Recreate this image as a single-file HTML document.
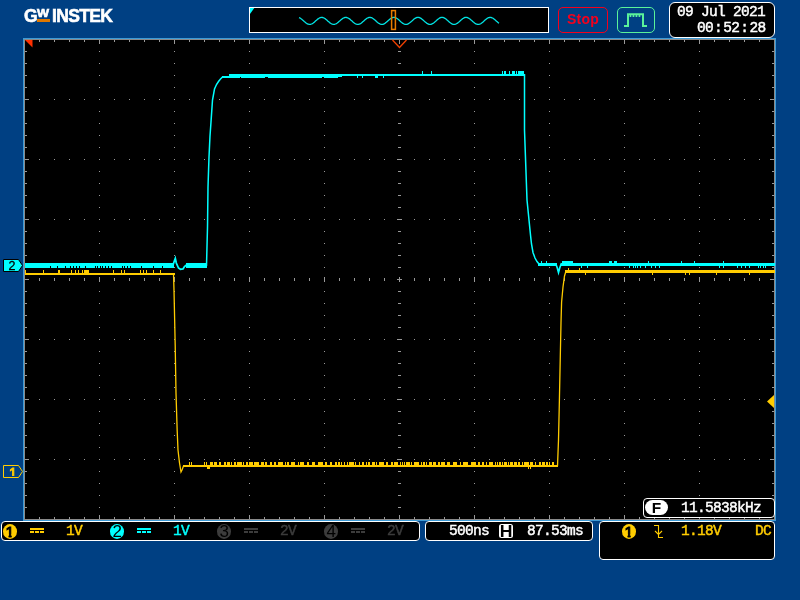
<!DOCTYPE html>
<html lang="en"><head><meta charset="utf-8"><title>GW Instek oscilloscope</title>
<style>
html,body{margin:0;padding:0}
body{width:800px;height:600px;overflow:hidden;position:relative;background:#004083;font-family:"Liberation Mono",monospace}
.a{position:absolute;box-sizing:border-box}
.t,.circ,.logo,.a{will-change:transform}
.box{position:absolute;box-sizing:border-box;background:#000;border:1px solid #fff;border-radius:4px}
.t{position:absolute;white-space:pre;font-family:"Liberation Mono",monospace;font-size:14.5px;letter-spacing:-0.7px;line-height:16px;color:#fff;-webkit-text-stroke:0.45px currentColor;margin-top:1px}.t i{font-style:normal;margin:0 1.1px}
.y{color:#ffcc00}.c{color:#00ffff}.g{color:#3c3c3c}
.circ{position:absolute;box-sizing:border-box;width:14.4px;height:15px;border-radius:50%;font-family:"Liberation Sans",sans-serif;font-size:17px;line-height:15.5px;text-align:center;color:#000}.circ b{position:absolute;left:2.55px;top:-1px;font-weight:normal;font-size:15.5px;line-height:17px;-webkit-text-stroke:1px #000;clip-path:polygon(0 0,100% 0,100% 11.1px,6px 11.1px,6px 100%,3.1px 100%,3.1px 11.1px,0 11.1px)}
.logo{position:absolute;font-family:"Liberation Sans",sans-serif;font-weight:bold;color:#fff;white-space:pre}
svg{position:absolute;left:0;top:0}
</style></head><body>

<div class="logo" style="left:23.5px;top:5px;font-size:17.5px;line-height:22px;-webkit-text-stroke:0.6px #fff">G</div>
<div class="logo" style="left:37.3px;top:4.6px;font-size:11px;line-height:16px;-webkit-text-stroke:0.6px #fff;transform:scaleX(1.16);transform-origin:0 0">W</div>
<div class="a" style="left:37px;top:19px;width:13px;height:3px;background:#e07800"></div>
<div class="logo" style="left:52.3px;top:5px;font-size:17.5px;line-height:22px;letter-spacing:-0.65px;-webkit-text-stroke:0.6px #fff">INSTEK</div>

<div class="a" style="left:249px;top:7px;width:300px;height:26px;background:#000;border:1px solid #fff"></div>
<div class="a" style="left:558px;top:7px;width:50px;height:26px;border:1px solid #f4001c;border-radius:5px;color:#f4001c;font-family:'Liberation Sans',sans-serif;font-weight:bold;font-size:14px;line-height:22px;letter-spacing:0.2px;text-align:center">Stop</div>
<div class="a" style="left:617px;top:7px;width:38px;height:26px;border:1px solid #5af29a;border-radius:5px"></div>

<div class="box" style="left:669px;top:2px;width:106px;height:36px;border-radius:6px"></div>
<div class="t" style="left:677px;top:3px">09 Jul 2021</div>
<div class="t" style="left:697px;top:19px">00<i>:</i>52<i>:</i>28</div>

<div class="a" style="left:23px;top:38px;width:753px;height:483px;border:1px solid #3c9ad6;background:#8a8a8a"></div>
<div class="a" style="left:25px;top:40px;width:749px;height:479px;background:#000"></div>

<div class="box" style="left:1px;top:521px;width:419px;height:20px"></div>
<div class="box" style="left:425px;top:521px;width:168px;height:20px"></div>
<div class="box" style="left:599px;top:521px;width:176px;height:39px"></div>
<svg width="800" height="600" viewBox="0 0 800 600" shape-rendering="crispEdges">
<g stroke="#999999" stroke-width="1" fill="none">
<line x1="99.5" y1="51" x2="99.5" y2="518" stroke-dasharray="1 11"/>
<line x1="174.5" y1="51" x2="174.5" y2="518" stroke-dasharray="1 11"/>
<line x1="249.5" y1="51" x2="249.5" y2="518" stroke-dasharray="1 11"/>
<line x1="324.5" y1="51" x2="324.5" y2="518" stroke-dasharray="1 11"/>
<line x1="474.5" y1="51" x2="474.5" y2="518" stroke-dasharray="1 11"/>
<line x1="549.5" y1="51" x2="549.5" y2="518" stroke-dasharray="1 11"/>
<line x1="624.5" y1="51" x2="624.5" y2="518" stroke-dasharray="1 11"/>
<line x1="699.5" y1="51" x2="699.5" y2="518" stroke-dasharray="1 11"/>
<line x1="39" y1="99.5" x2="773" y2="99.5" stroke-dasharray="1 14"/>
<line x1="39" y1="159.5" x2="773" y2="159.5" stroke-dasharray="1 14"/>
<line x1="39" y1="219.5" x2="773" y2="219.5" stroke-dasharray="1 14"/>
<line x1="39" y1="339.5" x2="773" y2="339.5" stroke-dasharray="1 14"/>
<line x1="39" y1="399.5" x2="773" y2="399.5" stroke-dasharray="1 14"/>
<line x1="39" y1="459.5" x2="773" y2="459.5" stroke-dasharray="1 14"/>
<line x1="399.5" y1="51" x2="399.5" y2="518" stroke-width="3" stroke-dasharray="1 11"/>
<line x1="39" y1="279.5" x2="773" y2="279.5" stroke-width="3" stroke-dasharray="1 14"/>
<line x1="399.5" y1="99" x2="399.5" y2="518" stroke-width="5" stroke-dasharray="1 59"/>
<line x1="99" y1="279.5" x2="773" y2="279.5" stroke-width="5" stroke-dasharray="1 74"/>
<line x1="39" y1="41" x2="773" y2="41" stroke-width="2" stroke-dasharray="1 14"/>
<line x1="99" y1="42" x2="773" y2="42" stroke-width="4" stroke-dasharray="1 74"/>
<line x1="39" y1="518" x2="773" y2="518" stroke-width="2" stroke-dasharray="1 14"/>
<line x1="99" y1="517" x2="773" y2="517" stroke-width="4" stroke-dasharray="1 74"/>
<line x1="26" y1="51" x2="26" y2="518" stroke-width="2" stroke-dasharray="1 11"/>
<line x1="27" y1="99" x2="27" y2="518" stroke-width="4" stroke-dasharray="1 59"/>
<line x1="773" y1="51" x2="773" y2="518" stroke-width="2" stroke-dasharray="1 11"/>
<line x1="772" y1="99" x2="772" y2="518" stroke-width="4" stroke-dasharray="1 59"/>
<path d="M397 279.5h5M399.5 277v5"/>
</g>
<path d="M25 40H32.5V47.5Z" fill="#ff3000" shape-rendering="auto"/>
<path d="M392.5 40L399.5 47.5L406.5 40" fill="none" stroke="#f04000" stroke-width="1.3" shape-rendering="auto"/>
<g fill="#ffcc00"><path d="M25 273h150v2h-150zM25 270h1v3h-1zM43 270h1v3h-1zM58 270h2v3h-2zM71 270h1v3h-1zM75 270h1v3h-1zM78 270h1v3h-1zM82 270h1v3h-1zM84 270h5v3h-5zM113 270h1v3h-1zM121 270h1v3h-1zM124 270h1v3h-1zM140 270h1v3h-1zM143 270h1v3h-1zM146 270h1v3h-1zM153 270h1v3h-1zM160 270h1v3h-1zM183 465h375v2h-375zM210 462h3v3h-3zM214 462h3v3h-3zM219 462h2v3h-2zM224 462h2v3h-2zM227 462h3v3h-3zM231 462h1v3h-1zM234 462h2v3h-2zM237 462h5v3h-5zM243 462h1v3h-1zM246 462h2v3h-2zM249 462h4v3h-4zM254 462h5v3h-5zM261 462h3v3h-3zM265 462h2v3h-2zM270 462h2v3h-2zM274 462h2v3h-2zM278 462h5v3h-5zM285 462h1v3h-1zM287 462h2v3h-2zM291 462h4v3h-4zM298 462h1v3h-1zM300 462h4v3h-4zM307 462h2v3h-2zM312 462h3v3h-3zM318 462h5v3h-5zM325 462h2v3h-2zM330 462h2v3h-2zM335 462h2v3h-2zM338 462h2v3h-2zM341 462h1v3h-1zM344 462h1v3h-1zM347 462h1v3h-1zM349 462h5v3h-5zM355 462h1v3h-1zM359 462h1v3h-1zM362 462h2v3h-2zM366 462h1v3h-1zM368 462h2v3h-2zM372 462h3v3h-3zM376 462h1v3h-1zM379 462h5v3h-5zM386 462h2v3h-2zM391 462h2v3h-2zM394 462h4v3h-4zM400 462h1v3h-1zM402 462h1v3h-1zM404 462h1v3h-1zM406 462h4v3h-4zM411 462h1v3h-1zM414 462h5v3h-5zM421 462h1v3h-1zM423 462h2v3h-2zM426 462h1v3h-1zM429 462h3v3h-3zM433 462h3v3h-3zM438 462h2v3h-2zM441 462h4v3h-4zM447 462h3v3h-3zM453 462h4v3h-4zM460 462h1v3h-1zM463 462h5v3h-5zM471 462h5v3h-5zM478 462h2v3h-2zM482 462h2v3h-2zM486 462h1v3h-1zM489 462h4v3h-4zM495 462h1v3h-1zM497 462h1v3h-1zM499 462h2v3h-2zM502 462h1v3h-1zM504 462h3v3h-3zM508 462h1v3h-1zM510 462h3v3h-3zM514 462h3v3h-3zM518 462h2v3h-2zM522 462h1v3h-1zM524 462h5v3h-5zM530 462h3v3h-3zM535 462h1v3h-1zM539 462h2v3h-2zM542 462h3v3h-3zM546 462h2v3h-2zM549 462h1v3h-1zM552 462h2v3h-2zM189 462h1v3h-1zM191 462h1v3h-1zM204 462h1v3h-1zM206 462h1v3h-1zM207 467h3v2h-3zM528 467h1v2h-1zM530 467h1v2h-1zM565 270h210v3h-210zM585 273h1v2h-1zM652 273h1v2h-1zM685 273h1v2h-1zM689 273h1v2h-1zM716 273h1v2h-1zM749 273h1v2h-1zM568 268h1v2h-1zM579 268h1v2h-1z"/></g>
<g fill="none" stroke="#ffcc00" stroke-width="1.3" shape-rendering="auto"><path d="M173.5 274 L174 290 L175.2 345 L176 393 L177.2 431 L178 450 L179.5 463 L181 472 L182 470 L183.5 466"/><path d="M557.5 466 L558.5 440 L559.4 400 L560.3 356 L561 323 L561.6 302 L563 287 L564.5 276 L566 271"/></g>
<g fill="#00ffff"><path d="M25 263h149v3h-149zM186 263h21v5h-21zM25 266h25v2h-25zM51 266h6v2h-6zM58 266h7v2h-7zM66 266h4v2h-4zM71 266h2v2h-2zM74 266h2v2h-2zM77 266h2v2h-2zM80 266h5v2h-5zM86 266h9v2h-9zM96 266h1v2h-1zM98 266h2v2h-2zM101 266h1v2h-1zM103 266h2v2h-2zM106 266h2v2h-2zM109 266h2v2h-2zM112 266h10v2h-10zM123 266h1v2h-1zM125 266h2v2h-2zM128 266h2v2h-2zM131 266h10v2h-10zM142 266h11v2h-11zM154 266h8v2h-8zM163 266h11v2h-11zM222 76h8v2h-8zM229 74h113v3h-113zM229 77h4v1h-4zM233 77h2v1h-2zM235 77h3v1h-3zM238 77h2v1h-2zM241 77h8v1h-8zM249 77h5v1h-5zM254 77h8v1h-8zM262 77h3v1h-3zM268 77h2v1h-2zM270 77h8v1h-8zM278 77h5v1h-5zM283 77h4v1h-4zM287 77h4v1h-4zM291 77h6v1h-6zM297 77h4v1h-4zM301 77h5v1h-5zM306 77h3v1h-3zM309 77h5v1h-5zM314 77h8v1h-8zM324 77h9v1h-9zM333 77h5v1h-5zM342 74h183v2h-183zM357 76h1v2h-1zM362 76h1v2h-1zM375 76h1v2h-1zM376 76h1v2h-1zM377 76h1v2h-1zM383 76h1v2h-1zM422 71h1v3h-1zM431 71h1v3h-1zM502 71h1v3h-1zM504 71h2v3h-2zM509 71h1v3h-1zM512 71h3v3h-3zM516 71h1v3h-1zM518 71h6v3h-6zM538 263h19v3h-19zM561 263h214v3h-214zM562 261h11v2h-11zM581 266h1v2h-1zM587 266h1v2h-1zM629 266h1v2h-1zM633 266h1v2h-1zM635 266h1v2h-1zM637 266h1v2h-1zM640 266h1v2h-1zM645 266h1v2h-1zM651 266h1v2h-1zM655 266h1v2h-1zM659 266h1v2h-1zM719 266h1v2h-1zM723 266h1v2h-1zM737 266h1v2h-1zM741 266h1v2h-1zM745 266h1v2h-1zM749 266h1v2h-1zM758 266h1v2h-1zM760 266h1v2h-1zM763 266h1v2h-1zM765 266h1v2h-1zM609 261h3v2h-3zM614 261h3v2h-3zM648 261h1v2h-1zM681 261h1v2h-1zM694 261h1v2h-1zM723 261h1v2h-1zM541 261h1v2h-1zM546 261h1v2h-1z"/></g>
<path d="M556 264.5 L557.3 268 L558.5 272.5 L559.7 268 L561.5 263" fill="none" stroke="#00ffff" stroke-width="1.7" shape-rendering="auto"/>
<path d="M173 265 L174 262 L175.3 258.5 L176.3 263 L178.5 268 L180.5 269.3 L183 269 L184.5 266.5 L186.5 265" fill="none" stroke="#00ffff" stroke-width="1.8" shape-rendering="auto"/>
<g fill="none" stroke="#00ffff" stroke-width="1.5" shape-rendering="auto"><path d="M206.5 266 L207.5 227 L208 187 L209 157 L210 136 L211 122 L212.5 100 L214.5 89 L216.5 84.5 L218.5 81.5 L220.5 79 L222.5 77"/><path d="M524.5 74 L524.5 130 L527 200 L529 220 L530.5 235 L531.5 244 L533 252.5 L535 258 L537 261.5 L539 264"/></g>
<path d="M774 395L767 401.5L774 408Z" fill="#ffcc00" shape-rendering="auto"/>
<path d="M3.5 259.5H18.5L22.5 265.5L18.5 271.5H3.5Z" fill="#00ffff" stroke="#000" stroke-width="1" shape-rendering="auto"/>
<path d="M3.5 465.5H18.5L22.5 471.5L18.5 477.5H3.5Z" fill="none" stroke="#ffcc00" stroke-width="1" shape-rendering="auto"/>
<path d="M250 8H254.3L250 14Z" fill="#00ffff" shape-rendering="auto"/>
<path d="M299.0 17.6 L299.5 17.8 L300.0 18.0 L300.5 18.3 L301.0 18.7 L301.5 19.0 L302.0 19.4 L302.5 19.9 L303.0 20.3 L303.5 20.8 L304.0 21.2 L304.5 21.7 L305.0 22.1 L305.5 22.5 L306.0 22.9 L306.5 23.3 L307.0 23.6 L307.5 23.9 L308.0 24.1 L308.5 24.2 L309.0 24.3 L309.5 24.4 L310.0 24.4 L310.5 24.3 L311.0 24.2 L311.5 24.0 L312.0 23.8 L312.5 23.5 L313.0 23.2 L313.5 22.8 L314.0 22.4 L314.5 22.0 L315.0 21.5 L315.5 21.1 L316.0 20.6 L316.5 20.2 L317.0 19.7 L317.5 19.3 L318.0 18.9 L318.5 18.6 L319.0 18.2 L319.5 18.0 L320.0 17.7 L320.5 17.6 L321.0 17.5 L321.5 17.4 L322.0 17.4 L322.5 17.5 L323.0 17.6 L323.5 17.8 L324.0 18.0 L324.5 18.3 L325.0 18.6 L325.5 19.0 L326.0 19.4 L326.5 19.8 L327.0 20.2 L327.5 20.7 L328.0 21.2 L328.5 21.6 L329.0 22.0 L329.5 22.5 L330.0 22.9 L330.5 23.2 L331.0 23.5 L331.5 23.8 L332.0 24.0 L332.5 24.2 L333.0 24.3 L333.5 24.4 L334.0 24.4 L334.5 24.3 L335.0 24.2 L335.5 24.0 L336.0 23.8 L336.5 23.5 L337.0 23.2 L337.5 22.8 L338.0 22.4 L338.5 22.0 L339.0 21.6 L339.5 21.1 L340.0 20.7 L340.5 20.2 L341.0 19.8 L341.5 19.4 L342.0 19.0 L342.5 18.6 L343.0 18.3 L343.5 18.0 L344.0 17.8 L344.5 17.6 L345.0 17.5 L345.5 17.4 L346.0 17.4 L346.5 17.5 L347.0 17.6 L347.5 17.8 L348.0 18.0 L348.5 18.3 L349.0 18.6 L349.5 18.9 L350.0 19.3 L350.5 19.7 L351.0 20.2 L351.5 20.6 L352.0 21.1 L352.5 21.5 L353.0 22.0 L353.5 22.4 L354.0 22.8 L354.5 23.2 L355.0 23.5 L355.5 23.8 L356.0 24.0 L356.5 24.2 L357.0 24.3 L357.5 24.4 L358.0 24.4 L358.5 24.3 L359.0 24.2 L359.5 24.1 L360.0 23.8 L360.5 23.6 L361.0 23.3 L361.5 22.9 L362.0 22.5 L362.5 22.1 L363.0 21.6 L363.5 21.2 L364.0 20.7 L364.5 20.3 L365.0 19.8 L365.5 19.4 L366.0 19.0 L366.5 18.6 L367.0 18.3 L367.5 18.0 L368.0 17.8 L368.5 17.6 L369.0 17.5 L369.5 17.4 L370.0 17.4 L370.5 17.5 L371.0 17.6 L371.5 17.7 L372.0 17.9 L372.5 18.2 L373.0 18.5 L373.5 18.9 L374.0 19.3 L374.5 19.7 L375.0 20.1 L375.5 20.6 L376.0 21.0 L376.5 21.5 L377.0 21.9 L377.5 22.4 L378.0 22.8 L378.5 23.1 L379.0 23.5 L379.5 23.7 L380.0 24.0 L380.5 24.2 L381.0 24.3 L381.5 24.4 L382.0 24.4 L382.5 24.4 L383.0 24.3 L383.5 24.1 L384.0 23.9 L384.5 23.6 L385.0 23.3 L385.5 22.9 L386.0 22.6 L386.5 22.1 L387.0 21.7 L387.5 21.3 L388.0 20.8 L388.5 20.3 L389.0 19.9 L389.5 19.5 L390.0 19.1 L390.5 18.7 L391.0 18.4 L391.5 18.1 L392.0 17.8 L392.5 17.6 L393.0 17.5 L393.5 17.4 L394.0 17.4 L394.5 17.4 L395.0 17.5 L395.5 17.7 L396.0 17.9 L396.5 18.2 L397.0 18.5 L397.5 18.8 L398.0 19.2 L398.5 19.6 L399.0 20.1 L399.5 20.5 L400.0 21.0 L400.5 21.4 L401.0 21.9 L401.5 22.3 L402.0 22.7 L402.5 23.1 L403.0 23.4 L403.5 23.7 L404.0 24.0 L404.5 24.2 L405.0 24.3 L405.5 24.4 L406.0 24.4 L406.5 24.4 L407.0 24.3 L407.5 24.1 L408.0 23.9 L408.5 23.6 L409.0 23.3 L409.5 23.0 L410.0 22.6 L410.5 22.2 L411.0 21.8 L411.5 21.3 L412.0 20.9 L412.5 20.4 L413.0 20.0 L413.5 19.5 L414.0 19.1 L414.5 18.7 L415.0 18.4 L415.5 18.1 L416.0 17.9 L416.5 17.7 L417.0 17.5 L417.5 17.4 L418.0 17.4 L418.5 17.4 L419.0 17.5 L419.5 17.7 L420.0 17.9 L420.5 18.1 L421.0 18.4 L421.5 18.8 L422.0 19.2 L422.5 19.6 L423.0 20.0 L423.5 20.4 L424.0 20.9 L424.5 21.4 L425.0 21.8 L425.5 22.2 L426.0 22.6 L426.5 23.0 L427.0 23.4 L427.5 23.7 L428.0 23.9 L428.5 24.1 L429.0 24.3 L429.5 24.4 L430.0 24.4 L430.5 24.4 L431.0 24.3 L431.5 24.1 L432.0 23.9 L432.5 23.7 L433.0 23.4 L433.5 23.0 L434.0 22.7 L434.5 22.3 L435.0 21.8 L435.5 21.4 L436.0 20.9 L436.5 20.5 L437.0 20.0 L437.5 19.6 L438.0 19.2 L438.5 18.8 L439.0 18.5 L439.5 18.1 L440.0 17.9 L440.5 17.7 L441.0 17.5 L441.5 17.4 L442.0 17.4 L442.5 17.4 L443.0 17.5 L443.5 17.6 L444.0 17.8 L444.5 18.1 L445.0 18.4 L445.5 18.7 L446.0 19.1 L446.5 19.5 L447.0 19.9 L447.5 20.4 L448.0 20.8 L448.5 21.3 L449.0 21.7 L449.5 22.2 L450.0 22.6 L450.5 23.0 L451.0 23.3 L451.5 23.6 L452.0 23.9 L452.5 24.1 L453.0 24.3 L453.5 24.4 L454.0 24.4 L454.5 24.4 L455.0 24.3 L455.5 24.2 L456.0 24.0 L456.5 23.7 L457.0 23.4 L457.5 23.1 L458.0 22.7 L458.5 22.3 L459.0 21.9 L459.5 21.4 L460.0 21.0 L460.5 20.5 L461.0 20.1 L461.5 19.7 L462.0 19.2 L462.5 18.8 L463.0 18.5 L463.5 18.2 L464.0 17.9 L464.5 17.7 L465.0 17.5 L465.5 17.4 L466.0 17.4 L466.5 17.4 L467.0 17.5 L467.5 17.6 L468.0 17.8 L468.5 18.1 L469.0 18.3 L469.5 18.7 L470.0 19.0 L470.5 19.4 L471.0 19.9 L471.5 20.3 L472.0 20.8 L472.5 21.2 L473.0 21.7 L473.5 22.1 L474.0 22.5 L474.5 22.9 L475.0 23.3 L475.5 23.6 L476.0 23.9 L476.5 24.1 L477.0 24.2 L477.5 24.3 L478.0 24.4 L478.5 24.4 L479.0 24.3 L479.5 24.2 L480.0 24.0 L480.5 23.8 L481.0 23.5 L481.5 23.1 L482.0 22.8 L482.5 22.4 L483.0 22.0 L483.5 21.5 L484.0 21.1 L484.5 20.6 L485.0 20.1 L485.5 19.7 L486.0 19.3 L486.5 18.9 L487.0 18.5 L487.5 18.2 L488.0 18.0 L488.5 17.7 L489.0 17.6 L489.5 17.5 L490.0 17.4 L490.5 17.4 L491.0 17.5 L491.5 17.6 L492.0 17.8 L492.5 18.0 L493.0 18.3 L493.5 18.6 L494.0 19.0 L494.5 19.4 L495.0 19.8 L495.5 20.3 L496.0 20.7 L496.5 21.2 L497.0 21.6 L497.5 22.1 L498.0 22.5 L498.5 22.9 L499.0 23.2" fill="none" stroke="#00e4e4" stroke-width="1.3" shape-rendering="auto"/>
<rect x="391.6" y="10.6" width="3.8" height="18.8" fill="none" stroke="#e87c00" stroke-width="1.5" shape-rendering="auto"/>
<path d="M624 25h3v-11.7h17v11.7h3v2h-5v-11.7h-1.7v1.6h-1.7v-1.6h-1.3v1.6h-1.7v-1.6h-1.3v1.6h-1.7v-1.6h-1.3v1.6h-1.7v-1.6h-0.6v11.7h-5z" fill="#5af29a" shape-rendering="auto"/>
<path d="M654 525.5H658.5V537.5H663M655 531L658.5 534.5L662 531" fill="none" stroke="#ffcc00" stroke-width="1.1" shape-rendering="auto"/>
<g fill="#ffcc00"><rect x="30" y="528" width="14" height="2"/><rect x="30" y="531" width="4" height="2"/><rect x="35" y="531" width="4" height="2"/><rect x="40" y="531" width="4" height="2"/></g>
<g fill="#00ffff"><rect x="137" y="528" width="14" height="2"/><rect x="137" y="531" width="4" height="2"/><rect x="142" y="531" width="4" height="2"/><rect x="147" y="531" width="4" height="2"/></g>
<g fill="#3c3c3c"><rect x="244" y="528" width="14" height="2"/><rect x="244" y="531" width="4" height="2"/><rect x="249" y="531" width="4" height="2"/><rect x="254" y="531" width="4" height="2"/></g>
<g fill="#3c3c3c"><rect x="351" y="528" width="14" height="2"/><rect x="351" y="531" width="4" height="2"/><rect x="356" y="531" width="4" height="2"/><rect x="361" y="531" width="4" height="2"/></g>
</svg>

<div class="a" style="left:7px;top:260px;width:10px;height:13px;font-family:'Liberation Sans',sans-serif;font-size:12.5px;line-height:13px;text-align:center;color:#000;-webkit-text-stroke:0.3px #000">2</div>
<div class="a" style="left:8.9px;top:465.4px;font-family:'Liberation Sans',sans-serif;font-size:14.2px;line-height:16px;color:#ffcc00;-webkit-text-stroke:0.9px #ffcc00;clip-path:inset(0 0 5.4px 0)">1</div>

<div class="box" style="left:643px;top:498px;width:132px;height:20px"></div>
<div class="a" style="left:645px;top:500px;width:23px;height:15px;background:#fff;border-radius:7.5px;color:#000;font-family:'Liberation Sans',sans-serif;font-weight:bold;font-size:15.5px;line-height:16.5px;text-align:center">F</div>
<div class="t" style="left:681px;top:499px">11.5838kHz</div>

<div class="circ" style="left:2.8px;top:524px;background:#ffcc00"><b>1</b></div>
<div class="t y" style="left:66px;top:522px">1V</div>
<div class="circ" style="left:109.8px;top:524px;background:#00ffff">2</div>
<div class="t c" style="left:173px;top:522px">1V</div>
<div class="circ" style="left:216.8px;top:524px;background:#3c3c3c">3</div>
<div class="t g" style="left:280px;top:522px">2V</div>
<div class="circ" style="left:323.8px;top:524px;background:#3c3c3c">4</div>
<div class="t g" style="left:387px;top:522px">2V</div>

<div class="t" style="left:449px;top:522px">500ns</div>
<div class="a" style="left:499px;top:524px;width:14px;height:14px;background:#fff;border-radius:2.5px;color:#000;font-family:'Liberation Sans',sans-serif;font-weight:bold;font-size:16px;line-height:16px;text-align:center"><span style="display:block;position:absolute;left:0;top:-0.4px;width:14px;transform:scaleX(1.1)">H</span></div>
<div class="t" style="left:527px;top:522px">87.53ms</div>

<div class="circ" style="left:621.8px;top:524px;background:#ffcc00"><b>1</b></div>
<div class="t y" style="left:681px;top:522px">1.18V</div>
<div class="t y" style="left:755px;top:522px">DC</div>

</body></html>
